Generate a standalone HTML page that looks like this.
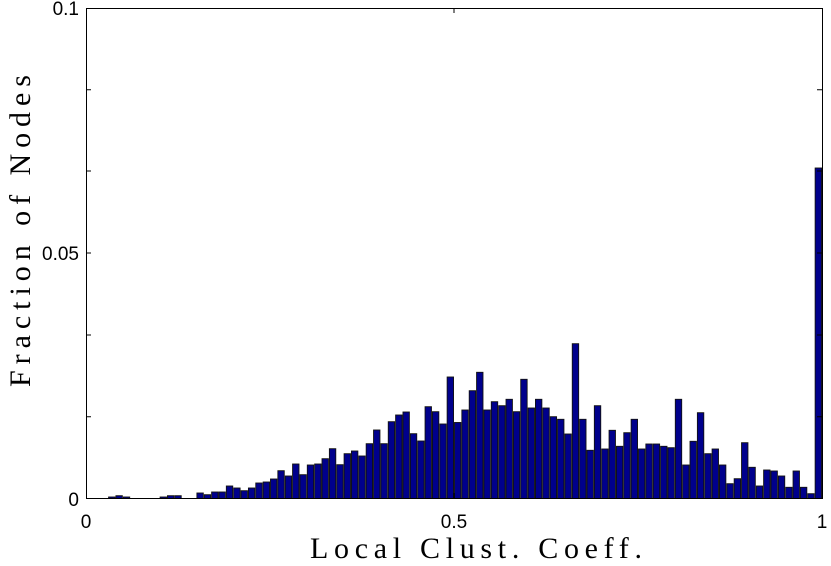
<!DOCTYPE html>
<html><head><meta charset="utf-8"><style>
html,body{margin:0;padding:0;background:#fff;}
svg{display:block;}
</style></head><body>
<svg width="831" height="566" viewBox="0 0 831 566" xmlns="http://www.w3.org/2000/svg">
<g fill="#00008c" stroke="#111" stroke-width="0.9">
<rect x="108.58" y="497" width="6.4" height="1.5"/>
<rect x="115.94" y="495.7" width="6.4" height="2.8"/>
<rect x="123.30" y="497" width="6.4" height="1.5"/>
<rect x="160.10" y="497" width="6.4" height="1.5"/>
<rect x="167.46" y="495.7" width="6.4" height="2.8"/>
<rect x="174.82" y="495.7" width="6.4" height="2.8"/>
<rect x="196.90" y="493" width="6.4" height="5.5"/>
<rect x="204.26" y="494.7" width="6.4" height="3.8"/>
<rect x="211.62" y="492" width="6.4" height="6.5"/>
<rect x="218.98" y="492" width="6.4" height="6.5"/>
<rect x="226.34" y="486" width="6.4" height="12.5"/>
<rect x="233.70" y="488" width="6.4" height="10.5"/>
<rect x="241.06" y="490.7" width="6.4" height="7.8"/>
<rect x="248.42" y="488" width="6.4" height="10.5"/>
<rect x="255.78" y="483" width="6.4" height="15.5"/>
<rect x="263.14" y="482" width="6.4" height="16.5"/>
<rect x="270.50" y="479" width="6.4" height="19.5"/>
<rect x="277.86" y="470.7" width="6.4" height="27.8"/>
<rect x="285.22" y="476" width="6.4" height="22.5"/>
<rect x="292.58" y="464" width="6.4" height="34.5"/>
<rect x="299.94" y="474.7" width="6.4" height="23.8"/>
<rect x="307.30" y="465" width="6.4" height="33.5"/>
<rect x="314.66" y="464" width="6.4" height="34.5"/>
<rect x="322.02" y="458.7" width="6.4" height="39.8"/>
<rect x="329.38" y="448.7" width="6.4" height="49.8"/>
<rect x="336.74" y="464.7" width="6.4" height="33.8"/>
<rect x="344.10" y="453.7" width="6.4" height="44.8"/>
<rect x="351.46" y="451" width="6.4" height="47.5"/>
<rect x="358.82" y="456" width="6.4" height="42.5"/>
<rect x="366.18" y="443.7" width="6.4" height="54.8"/>
<rect x="373.54" y="430" width="6.4" height="68.5"/>
<rect x="380.90" y="443.7" width="6.4" height="54.8"/>
<rect x="388.26" y="421.7" width="6.4" height="76.8"/>
<rect x="395.62" y="415" width="6.4" height="83.5"/>
<rect x="402.98" y="412" width="6.4" height="86.5"/>
<rect x="410.34" y="433.7" width="6.4" height="64.8"/>
<rect x="417.70" y="441" width="6.4" height="57.5"/>
<rect x="425.06" y="406.7" width="6.4" height="91.8"/>
<rect x="432.42" y="411.7" width="6.4" height="86.8"/>
<rect x="439.78" y="424" width="6.4" height="74.5"/>
<rect x="447.14" y="377" width="6.4" height="121.5"/>
<rect x="454.50" y="422.5" width="6.4" height="76"/>
<rect x="461.86" y="410" width="6.4" height="88.5"/>
<rect x="469.22" y="390.7" width="6.4" height="107.8"/>
<rect x="476.58" y="372.3" width="6.4" height="126.2"/>
<rect x="483.94" y="410" width="6.4" height="88.5"/>
<rect x="491.30" y="401.7" width="6.4" height="96.8"/>
<rect x="498.66" y="405.7" width="6.4" height="92.8"/>
<rect x="506.02" y="399.3" width="6.4" height="99.2"/>
<rect x="513.38" y="411.7" width="6.4" height="86.8"/>
<rect x="520.74" y="379.3" width="6.4" height="119.2"/>
<rect x="528.10" y="408" width="6.4" height="90.5"/>
<rect x="535.46" y="399.3" width="6.4" height="99.2"/>
<rect x="542.82" y="408" width="6.4" height="90.5"/>
<rect x="550.18" y="416.7" width="6.4" height="81.8"/>
<rect x="557.54" y="419.3" width="6.4" height="79.2"/>
<rect x="564.90" y="434" width="6.4" height="64.5"/>
<rect x="572.26" y="343.7" width="6.4" height="154.8"/>
<rect x="579.62" y="419.3" width="6.4" height="79.2"/>
<rect x="586.98" y="450.3" width="6.4" height="48.2"/>
<rect x="594.34" y="405.7" width="6.4" height="92.8"/>
<rect x="601.70" y="449" width="6.4" height="49.5"/>
<rect x="609.06" y="430.3" width="6.4" height="68.2"/>
<rect x="616.42" y="446.3" width="6.4" height="52.2"/>
<rect x="623.78" y="432.7" width="6.4" height="65.8"/>
<rect x="631.14" y="419.3" width="6.4" height="79.2"/>
<rect x="638.50" y="449" width="6.4" height="49.5"/>
<rect x="645.86" y="444" width="6.4" height="54.5"/>
<rect x="653.22" y="444" width="6.4" height="54.5"/>
<rect x="660.58" y="446.3" width="6.4" height="52.2"/>
<rect x="667.94" y="447.7" width="6.4" height="50.8"/>
<rect x="675.30" y="399.3" width="6.4" height="99.2"/>
<rect x="682.66" y="465" width="6.4" height="33.5"/>
<rect x="690.02" y="441.3" width="6.4" height="57.2"/>
<rect x="697.38" y="412.7" width="6.4" height="85.8"/>
<rect x="704.74" y="453.7" width="6.4" height="44.8"/>
<rect x="712.10" y="449" width="6.4" height="49.5"/>
<rect x="719.46" y="465" width="6.4" height="33.5"/>
<rect x="726.82" y="483.7" width="6.4" height="14.8"/>
<rect x="734.18" y="478.7" width="6.4" height="19.8"/>
<rect x="741.54" y="442.7" width="6.4" height="55.8"/>
<rect x="748.90" y="467.3" width="6.4" height="31.2"/>
<rect x="756.26" y="486" width="6.4" height="12.5"/>
<rect x="763.62" y="470" width="6.4" height="28.5"/>
<rect x="770.98" y="471" width="6.4" height="27.5"/>
<rect x="778.34" y="476" width="6.4" height="22.5"/>
<rect x="785.70" y="487.3" width="6.4" height="11.2"/>
<rect x="793.06" y="471" width="6.4" height="27.5"/>
<rect x="800.42" y="487.3" width="6.4" height="11.2"/>
<rect x="807.78" y="493.7" width="6.4" height="4.8"/>
<rect x="815.14" y="168" width="6.4" height="330.5"/>
</g>
<g fill="none" stroke="#000" stroke-width="1">
<rect x="86.5" y="8.5" width="736" height="490"/>
<path d="M86 89.7h5M86 171h5M86 253h5M86 335h5M86 416.7h5M822 89.7h-5M822 171h-5M822 253h-5M822 335h-5M822 416.7h-5M454 498v-5M454 8v5"/>
</g>
<g font-family="Liberation Sans, sans-serif" font-size="19" fill="#000">
<text x="79" y="15" text-anchor="end">0.1</text>
<text x="79" y="260" text-anchor="end">0.05</text>
<text x="79" y="506" text-anchor="end">0</text>
<text x="86" y="528" text-anchor="middle">0</text>
<text x="454" y="528" text-anchor="middle">0.5</text>
<text x="822" y="528" text-anchor="middle">1</text>
</g>
<text x="310" y="558" textLength="332" lengthAdjust="spacing" font-family="Liberation Serif, serif" font-size="30">Local Clust. Coeff.</text>
<text transform="translate(30,387) rotate(-90)" textLength="312" lengthAdjust="spacing" font-family="Liberation Serif, serif" font-size="30">Fraction of Nodes</text>
</svg>
</body></html>
